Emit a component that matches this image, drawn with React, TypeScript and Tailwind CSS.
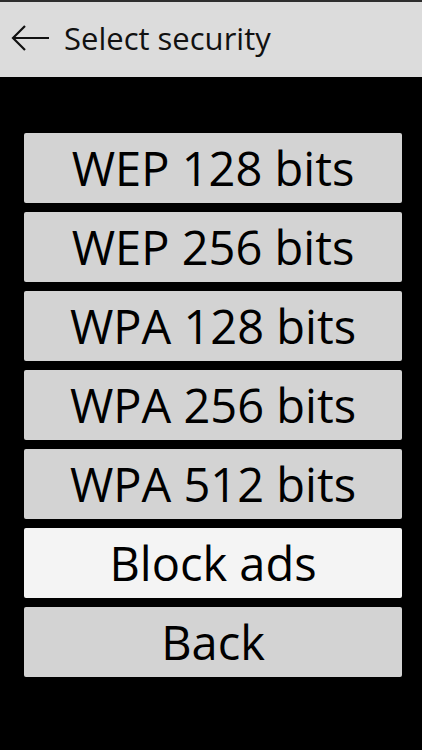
const options = [
  { label: "WEP 128 bits" },
  { label: "WEP 256 bits" },
  { label: "WPA 128 bits" },
  { label: "WPA 256 bits" },
  { label: "WPA 512 bits" },
  { label: "Block ads", active: true },
  { label: "Back" },
]

function BackArrow() {
  return (
    <svg width="40" height="28" viewBox="0 0 40 28" fill="none" stroke="#111" strokeWidth="2.2">
      <path d="M2 14 H38" />
      <path d="M14 2 L2 14 L14 26" strokeLinejoin="miter" />
    </svg>
  )
}

export default function App() {
  return (
    <div
      className="flex h-[750px] w-[422px] flex-col bg-black"
      style={{ fontFamily: '"Open Sans", "Noto Sans", sans-serif' }}
    >
      <div className="h-[2px] bg-[#2e2e2e]" />
      <header className="flex h-[75px] items-center gap-[13px] bg-[#dcdcdc] pb-[3px] pl-[11px]">
        <BackArrow />
        <h1 className="text-[31px] leading-none text-[#111]">Select security</h1>
      </header>
      <main className="flex flex-col gap-[9px] pl-[24px] pr-[20px] pt-[56px]">
        {options.map((o) => (
          <button
            key={o.label}
            className={`flex h-[70px] items-center justify-center rounded-[2px] text-[47px] leading-none text-black ${
              o.active ? "bg-[#f4f4f4]" : "bg-[#d3d3d3]"
            }`}
          >
            {o.label}
          </button>
        ))}
      </main>
    </div>
  )
}
